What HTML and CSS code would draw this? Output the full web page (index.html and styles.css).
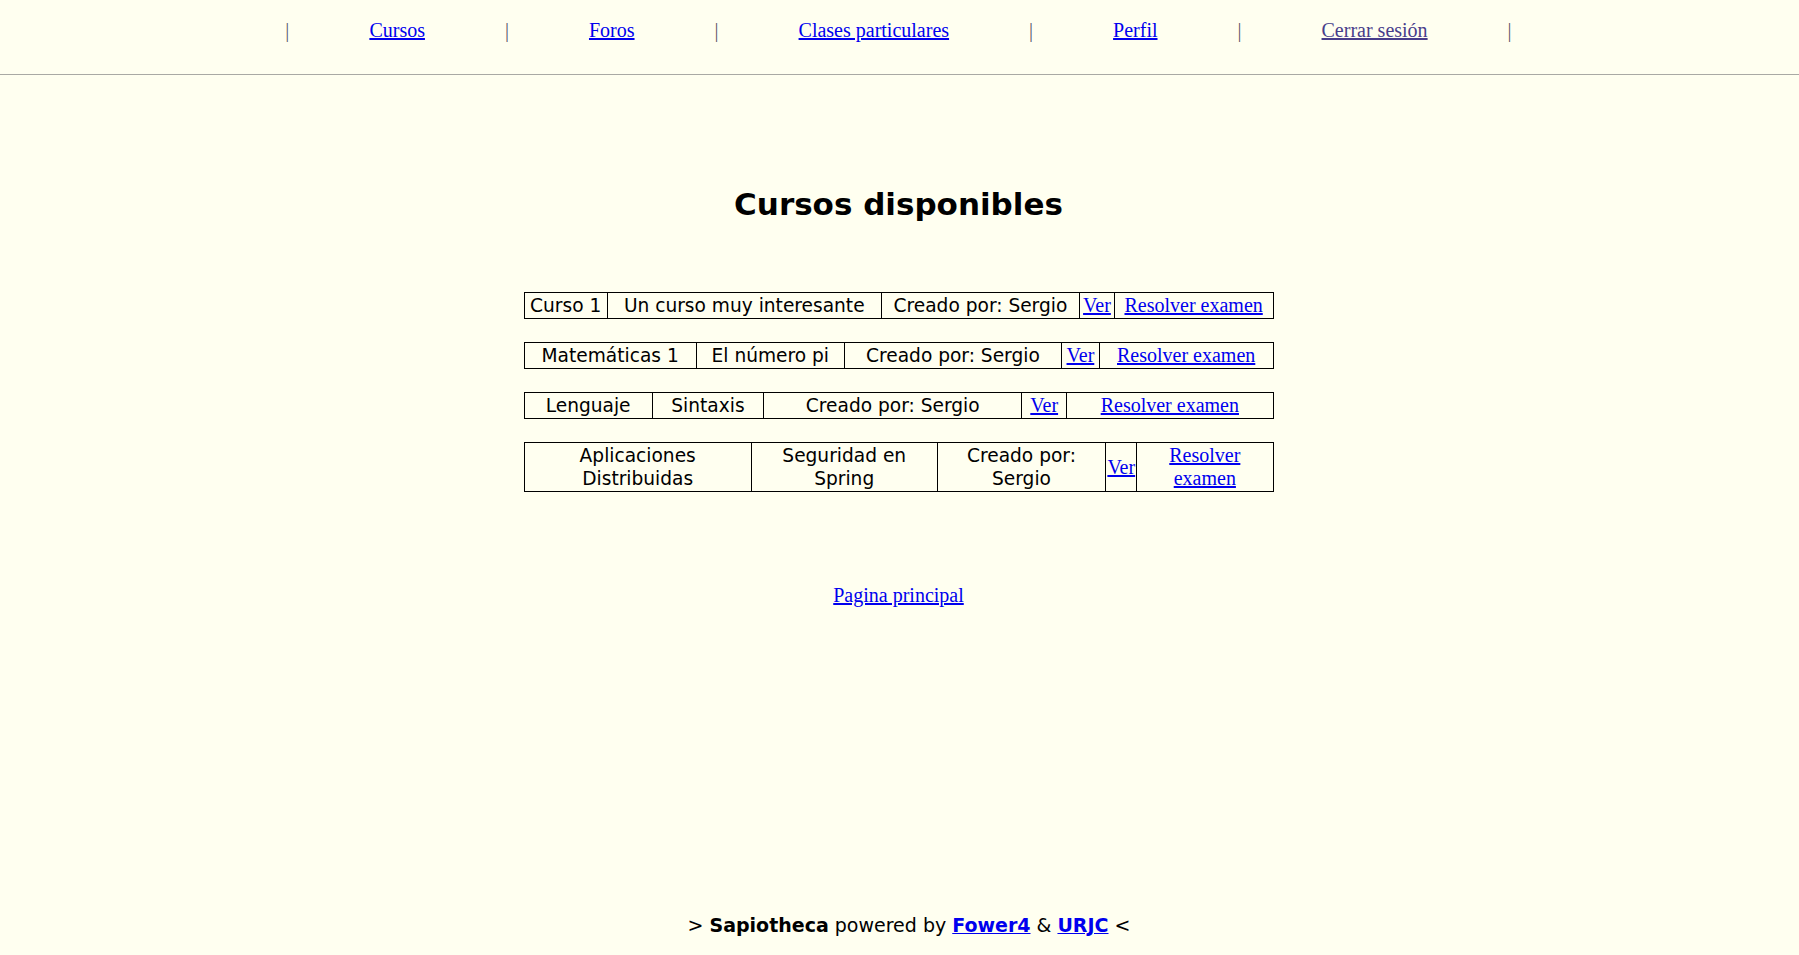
FILE: index.html
```html
<!DOCTYPE html>
<html lang="es">
<head>
<meta charset="utf-8">
<title>Sapiotheca - Cursos</title>
<link rel="stylesheet" href="styles.css">
</head>
<body>
<header class="topbar">
  <nav class="nav">
    <span class="sep">|</span>
    <a class="nav-link" href="#">Cursos</a>
    <span class="sep">|</span>
    <a class="nav-link" href="#">Foros</a>
    <span class="sep">|</span>
    <a class="nav-link" href="#">Clases particulares</a>
    <span class="sep">|</span>
    <a class="nav-link" href="#">Perfil</a>
    <span class="sep">|</span>
    <a class="nav-link nav-visited" href="#">Cerrar sesión</a>
    <span class="sep">|</span>
  </nav>
</header>

<main class="content">
  <h1 class="title">Cursos disponibles</h1>

  <div class="courses">
    <table class="course">
      <tr>
        <td>Curso 1</td>
        <td>Un curso muy interesante</td>
        <td>Creado por: Sergio</td>
        <td><a class="link" href="#">Ver</a></td>
        <td><a class="link" href="#">Resolver examen</a></td>
      </tr>
    </table>
    <table class="course">
      <tr>
        <td>Matemáticas 1</td>
        <td>El número pi</td>
        <td>Creado por: Sergio</td>
        <td><a class="link" href="#">Ver</a></td>
        <td><a class="link" href="#">Resolver examen</a></td>
      </tr>
    </table>
    <table class="course">
      <tr>
        <td>Lenguaje</td>
        <td>Sintaxis</td>
        <td>Creado por: Sergio</td>
        <td><a class="link" href="#">Ver</a></td>
        <td><a class="link" href="#">Resolver examen</a></td>
      </tr>
    </table>
    <table class="course">
      <tr>
        <td>Aplicaciones Distribuidas</td>
        <td>Seguridad en Spring</td>
        <td>Creado por: Sergio</td>
        <td><a class="link" href="#">Ver</a></td>
        <td><a class="link" href="#">Resolver examen</a></td>
      </tr>
    </table>
  </div>

  <a class="link home" href="#">Pagina principal</a>
</main>

<footer class="footer">
  &gt; <b>Sapiotheca</b> powered by <a class="foot-link" href="#">Fower4</a> &amp; <a class="foot-link" href="#">URJC</a> &lt;
</footer>
</body>
</html>
```

FILE: styles.css
```css
html, body {
  margin: 0;
  padding: 0;
}

body {
  background: #fffff0;
  color: #000;
  font-family: "DejaVu Sans", Verdana, sans-serif;
  min-height: 100vh;
  display: flex;
  flex-direction: column;
}

.topbar {
  padding: 19px 2px 32px 0;
  border-bottom: 1px solid #a9a9a4;
}

.nav {
  display: flex;
  justify-content: center;
  align-items: baseline;
  font-family: "Liberation Serif", "Times New Roman", serif;
  font-size: 20px;
  line-height: 23px;
}

.sep {
  color: #5a5a6a;
}

.nav-link {
  color: #0000ee;
  padding: 0 80px;
}

.nav-visited {
  color: #483d8b;
}

.content {
  display: flex;
  flex-direction: column;
  align-items: center;
  padding: 111px 2px 0 0;
}

.title {
  margin: 0;
  font-size: 31px;
  font-weight: bold;
  line-height: 36px;
}

.courses {
  display: flex;
  flex-direction: column;
  gap: 23px;
  margin-top: 70px;
}

.course {
  width: 750px;
  border-collapse: collapse;
  border: 1px solid #000;
  font-size: 18.6px;
}

.course td {
  border: 1px solid #000;
  padding: 1px;
  text-align: center;
  line-height: 23px;
}

.link {
  color: #0000ee;
  font-family: "Liberation Serif", "Times New Roman", serif;
  font-size: 20px;
}

.home {
  margin-top: 92px;
  line-height: 23px;
}

.footer {
  margin-top: auto;
  padding: 0 0 19px 19px;
  text-align: center;
  font-size: 19px;
  line-height: 22px;
}

.foot-link {
  color: #0000ee;
  font-weight: bold;
}
```
